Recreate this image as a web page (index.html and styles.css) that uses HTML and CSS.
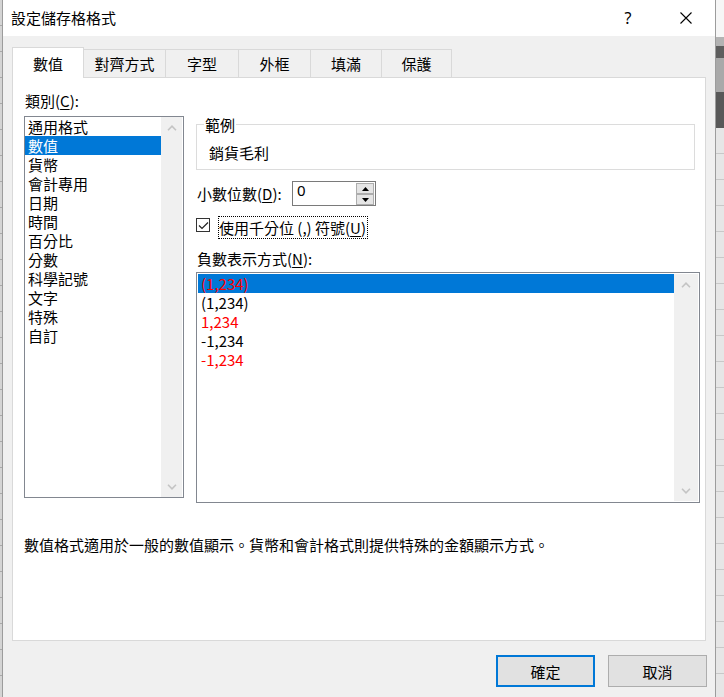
FILE: index.html
```html
<!DOCTYPE html>
<html lang="zh-Hant">
<head>
<meta charset="utf-8">
<title>設定儲存格格式</title>
<link rel="stylesheet" href="styles.css">
</head>
<body>
<div class="screen">
  <div class="edge-left"></div>
  <div class="dialog">
    <div class="titlebar">
      <span class="title">設定儲存格格式</span>
      <span class="cap help">?</span>
      <span class="cap close">
        <svg width="12" height="12" viewBox="0 0 12 12"><path d="M0.5 0.5 L11.5 11.5 M11.5 0.5 L0.5 11.5" stroke="#000" stroke-width="1.1" fill="none"/></svg>
      </span>
    </div>
    <div class="body">
      <div class="tabs">
        <div class="tab active t1">數值</div>
        <div class="tab t2">對齊方式</div>
        <div class="tab t3">字型</div>
        <div class="tab t4">外框</div>
        <div class="tab t5">填滿</div>
        <div class="tab t6">保護</div>
      </div>
      <div class="panel">
        <div class="cols">
          <div class="left">
            <div class="lbl">類別(<u>C</u>):</div>
            <div class="listbox cat">
              <ul class="items">
                <li>通用格式</li>
                <li class="sel">數值</li>
                <li>貨幣</li>
                <li>會計專用</li>
                <li>日期</li>
                <li>時間</li>
                <li>百分比</li>
                <li>分數</li>
                <li>科學記號</li>
                <li>文字</li>
                <li>特殊</li>
                <li>自訂</li>
              </ul>
              <div class="vscroll">
                <span class="arrow"><svg width="10" height="6" viewBox="0 0 10 6"><path d="M1 5.2 L5 1.2 L9 5.2" stroke="#c4c4c4" stroke-width="1.6" fill="none"/></svg></span>
                <span class="arrow"><svg width="10" height="6" viewBox="0 0 10 6"><path d="M1 0.8 L5 4.8 L9 0.8" stroke="#c4c4c4" stroke-width="1.6" fill="none"/></svg></span>
              </div>
            </div>
          </div>
          <div class="right">
            <fieldset class="sample">
              <legend>範例</legend>
              <div class="sample-text">銷貨毛利</div>
            </fieldset>
            <div class="spin-row">
              <span class="spin-lbl">小數位數(<u>D</u>):</span>
              <div class="spin">
                <span class="spin-val">0</span>
                <div class="spin-btns">
                  <span class="sbtn"><svg width="7" height="4" viewBox="0 0 7 4"><path d="M0 4 L3.5 0 L7 4 Z" fill="#000"/></svg></span>
                  <span class="sbtn"><svg width="7" height="4" viewBox="0 0 7 4"><path d="M0 0 L3.5 4 L7 0 Z" fill="#000"/></svg></span>
                </div>
              </div>
            </div>
            <div class="check-row">
              <span class="checkbox"><svg width="11" height="11" viewBox="0 0 11 11"><path d="M1 5.5 L4 8.5 L10 2.5" stroke="#222" stroke-width="1.2" fill="none"/></svg></span>
              <span class="check-lbl">使用千分位 (,) 符號(<u>U</u>)</span>
            </div>
            <div class="lbl neg-lbl">負數表示方式(<u>N</u>):</div>
            <div class="listbox neg">
              <ul class="items">
                <li class="sel red">(1,234)</li>
                <li>(1,234)</li>
                <li class="red">1,234</li>
                <li>-1,234</li>
                <li class="red">-1,234</li>
              </ul>
              <div class="vscroll">
                <span class="arrow"><svg width="10" height="6" viewBox="0 0 10 6"><path d="M1 5.2 L5 1.2 L9 5.2" stroke="#c4c4c4" stroke-width="1.6" fill="none"/></svg></span>
                <span class="arrow"><svg width="10" height="6" viewBox="0 0 10 6"><path d="M1 0.8 L5 4.8 L9 0.8" stroke="#c4c4c4" stroke-width="1.6" fill="none"/></svg></span>
              </div>
            </div>
          </div>
        </div>
        <p class="desc">數值格式適用於一般的數值顯示。貨幣和會計格式則提供特殊的金額顯示方式。</p>
      </div>
      <div class="buttons">
        <button class="btn default">確定</button>
        <button class="btn">取消</button>
      </div>
    </div>
  </div>
  <div class="edge-right">
    <div class="er er1"></div>
    <div class="er er2"></div>
    <div class="er er3"></div>
    <div class="er er4"></div>
    <div class="er er5"></div>
    <div class="er er6"></div>
  </div>
</div>
</body>
</html>
```

FILE: styles.css
```css
* { box-sizing: border-box; }
html, body { margin: 0; padding: 0; }
body {
  width: 724px;
  height: 697px;
  overflow: hidden;
  font-family: "Noto Sans CJK TC", "Noto Sans", sans-serif;
  font-size: 15px;
  color: #000;
  background: #e6e6e6;
}
u { text-decoration: underline; text-underline-offset: 2px; }

.screen { display: flex; height: 697px; }

.edge-left {
  width: 2px;
  background: repeating-linear-gradient(to bottom, #d4d4d4 0 25px, #a9a9a9 25px 26px);
}

.dialog {
  width: 714px;
  display: flex;
  flex-direction: column;
  background: #f0f0f0;
  border-left: 1px solid #9c9c9c;
  border-right: 1px solid #9c9c9c;
}

/* title bar */
.titlebar {
  height: 36px;
  background: #fff;
  display: flex;
  align-items: center;
  padding-left: 8px;
}
.title { flex: 1; line-height: 20px; }
.cap {
  width: 58px;
  height: 36px;
  display: flex;
  align-items: center;
  justify-content: center;
}
.help { font-family: "Noto Sans", sans-serif; font-size: 16px; }

/* body */
.body { padding: 11px 9px 0 9px; flex: 1; }

.tabs { display: flex; align-items: flex-end; height: 30px; }
.tab {
  height: 28px;
  border-top: 1px solid #d9d9d9;
  border-right: 1px solid #d9d9d9;
  display: flex;
  align-items: center;
  justify-content: center;
  background: #f0f0f0;
}
.tab.active {
  height: 31px;
  background: #fff;
  border-left: 1px solid #d9d9d9;
  margin-bottom: -1px;
  position: relative;
  z-index: 1;
}
.t1 { width: 72px; }
.t2 { width: 82px; }
.t3 { width: 73px; }
.t4 { width: 72px; }
.t5 { width: 71px; }
.t6 { width: 70px; }

.panel {
  height: 564px;
  background: #fff;
  border: 1px solid #d9d9d9;
  padding: 13px 0 0 11px;
}

.cols {
  display: grid;
  grid-template-columns: 160px 504px;
  column-gap: 12px;
}

.lbl { line-height: 19px; height: 19px; padding-left: 1px; }

/* list boxes */
.listbox {
  display: flex;
  border: 1px solid #828790;
  background: #fff;
}
.cat { margin-top: 6px; height: 382px; }
.neg { margin-top: 4px; height: 231px; padding: 1px; }

.items { list-style: none; margin: 0; padding: 0; flex: 1; }
.items li { height: 19px; line-height: 19px; padding-left: 3px; white-space: nowrap; }
.items li.sel { background: #0078d7; color: #fff; }
.items li.red { color: #ff0000; }

.vscroll {
  display: flex;
  flex-direction: column;
  justify-content: space-between;
  background: #f0f0f0;
}
.cat .vscroll { width: 21px; margin-right: 1px; }
.neg .vscroll { width: 24px; }
.arrow { height: 21px; display: flex; align-items: center; justify-content: center; }

/* sample group */
.sample {
  margin: 24px 0 0 0;
  width: 499px;
  min-width: 0;
  border: 1px solid #dcdcdc;
  padding: 0 7px 7px 7px;
}
.sample legend { padding: 0 1px; line-height: 19px; height: 19px; }
.sample-text { margin-top: 9px; height: 19px; line-height: 19px; padding-left: 5px; }

/* decimal spinner */
.spin-row { margin-top: 11px; display: flex; align-items: center; height: 25px; }
.spin-lbl { width: 96px; padding-left: 1px; line-height: 19px; }
.spin {
  width: 84px;
  height: 25px;
  border: 1px solid #7a7a7a;
  display: flex;
  background: #fff;
}
.spin-val { flex: 1; padding-left: 4px; line-height: 17px; font-family: "Noto Sans", sans-serif; }
.spin-btns { display: flex; flex-direction: column; width: 18px; margin: 1px 1px 0 0; }
.sbtn {
  height: 11px;
  border: 1px solid #adadad;
  background: #e5e5e5;
  display: flex;
  align-items: center;
  justify-content: center;
}

/* checkbox */
.check-row { margin-top: 10px; display: flex; height: 23px; }
.checkbox {
  width: 14px;
  height: 14px;
  margin-top: 2px;
  border: 1px solid #333;
  display: flex;
  align-items: center;
  justify-content: center;
  background: #fff;
}
.check-lbl {
  margin-left: 8px;
  height: 23px;
  line-height: 21px;
  border: 1px dotted #000;
  padding-right: 1px;
}

.neg-lbl { margin-top: 10px; }

.desc { margin: 32px 0 0 0; line-height: 19px; }

/* buttons */
.buttons {
  margin-top: 14px;
  margin-right: -1px;
  display: flex;
  justify-content: flex-end;
  gap: 13px;
}
.btn {
  width: 99px;
  height: 32px;
  background: #e1e1e1;
  border: 1px solid #adadad;
  font: inherit;
  color: #000;
  padding: 0;
  line-height: 19px;
}
.btn.default { border: 2px solid #0078d7; }

/* background sheet visible at right */
.edge-right { width: 8px; display: flex; flex-direction: column; }
.er1 { height: 37px; background: #f6f6f6; }
.er2 { height: 9px; background: #b3b3b3; }
.er3 { height: 12px; background: #5e5e5e; }
.er4 { height: 34px; background: #a9a9a9; }
.er5 { height: 36px; background: #585858; }
.er6 { flex: 1; background: repeating-linear-gradient(to bottom, #e6e6e6 0 25px, #c8c8c8 25px 26px); }
```
